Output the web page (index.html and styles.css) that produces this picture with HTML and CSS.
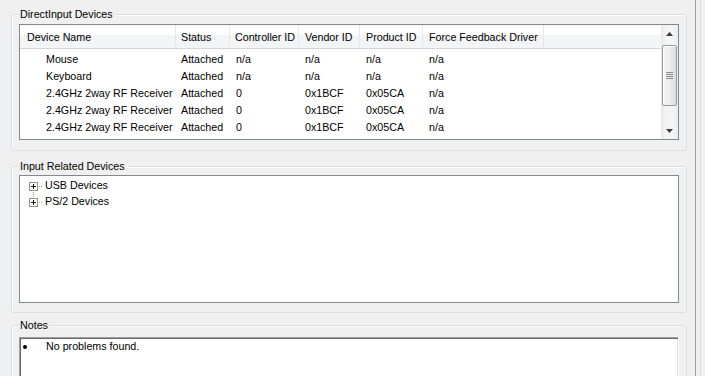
FILE: index.html
```html
<!DOCTYPE html>
<html>
<head>
<meta charset="utf-8">
<link rel="stylesheet" href="styles.css">
</head>
<body>
<div class="window">
  <div class="main">
    <section class="group g1">
      <div class="group-label">DirectInput Devices</div>
      <div class="listview">
        <div class="lv-body">
          <div class="lv-header cols">
            <div class="hcell">Device Name</div>
            <div class="hcell">Status</div>
            <div class="hcell">Controller ID</div>
            <div class="hcell">Vendor ID</div>
            <div class="hcell">Product ID</div>
            <div class="hcell">Force Feedback Driver</div>
            <div class="hcell filler"></div>
          </div>
          <div class="lv-rows">
            <div class="lv-row cols"><div class="c name">Mouse</div><div class="c">Attached</div><div class="c">n/a</div><div class="c">n/a</div><div class="c">n/a</div><div class="c">n/a</div></div>
            <div class="lv-row cols"><div class="c name">Keyboard</div><div class="c">Attached</div><div class="c">n/a</div><div class="c">n/a</div><div class="c">n/a</div><div class="c">n/a</div></div>
            <div class="lv-row cols"><div class="c name">2.4GHz 2way RF Receiver</div><div class="c">Attached</div><div class="c">0</div><div class="c">0x1BCF</div><div class="c">0x05CA</div><div class="c">n/a</div></div>
            <div class="lv-row cols"><div class="c name">2.4GHz 2way RF Receiver</div><div class="c">Attached</div><div class="c">0</div><div class="c">0x1BCF</div><div class="c">0x05CA</div><div class="c">n/a</div></div>
            <div class="lv-row cols"><div class="c name">2.4GHz 2way RF Receiver</div><div class="c">Attached</div><div class="c">0</div><div class="c">0x1BCF</div><div class="c">0x05CA</div><div class="c">n/a</div></div>
          </div>
        </div>
        <div class="vscroll">
          <div class="sb-btn">
            <svg width="7" height="4" viewBox="0 0 7 4"><path d="M3.5 0 L7 4 L0 4 Z" fill="#3c3c3c"/></svg>
          </div>
          <div class="sb-track">
            <div class="sb-thumb">
              <svg width="7" height="7" viewBox="0 0 7 7"><path d="M0 0.5H7M0 2.5H7M0 4.5H7M0 6.5H7" stroke="#8a8a8a" stroke-width="1"/></svg>
            </div>
          </div>
          <div class="sb-btn">
            <svg width="7" height="4" viewBox="0 0 7 4"><path d="M0 0 L7 0 L3.5 4 Z" fill="#3c3c3c"/></svg>
          </div>
        </div>
      </div>
    </section>

    <section class="group g2">
      <div class="group-label">Input Related Devices</div>
      <div class="tree">
        <div class="tree-item">
          <svg class="exp" width="16" height="16" viewBox="0 0 16 16">
            <rect x="0.5" y="5.5" width="8" height="8" fill="#fff" stroke="#919191"/>
            <path d="M2 9.5H7M4.5 7V12" stroke="#1a1a1a"/>
            <rect x="10" y="9" width="1" height="1" fill="#a0a0a0"/>
            <rect x="12" y="9" width="1" height="1" fill="#a0a0a0"/>
            <rect x="4" y="15" width="1" height="1" fill="#a0a0a0"/>
          </svg>
          <span>USB Devices</span>
        </div>
        <div class="tree-item">
          <svg class="exp" width="16" height="16" viewBox="0 0 16 16">
            <rect x="4" y="1" width="1" height="1" fill="#a0a0a0"/>
            <rect x="4" y="3" width="1" height="1" fill="#a0a0a0"/>
            <rect x="0.5" y="5.5" width="8" height="8" fill="#fff" stroke="#919191"/>
            <path d="M2 9.5H7M4.5 7V12" stroke="#1a1a1a"/>
            <rect x="10" y="9" width="1" height="1" fill="#a0a0a0"/>
            <rect x="12" y="9" width="1" height="1" fill="#a0a0a0"/>
          </svg>
          <span>PS/2 Devices</span>
        </div>
      </div>
    </section>

    <section class="group g3">
      <div class="group-label">Notes</div>
      <div class="notes">
        <div class="note"><span class="bullet"></span><span>No problems found.</span></div>
      </div>
    </section>
  </div>
  <div class="divider"></div>
  <div class="side"></div>
</div>
</body>
</html>
```

FILE: styles.css
```css
html, body {
  margin: 0;
  padding: 0;
}
body {
  background: #f0f0f0;
  font: 10.7px "Liberation Sans", Arial, sans-serif;
  color: #000;
}
.window {
  display: flex;
  height: 376px;
  overflow: hidden;
}
.main {
  width: 695px;
  flex: none;
  box-sizing: border-box;
  padding: 14px 8px 0 11px;
  display: flex;
  flex-direction: column;
}
.divider {
  width: 1px;
  flex: none;
  background: #a0a0a0;
}
.side {
  flex: 1;
  margin-left: 4px;
  border-left: 1px solid #dcdcdc;
}

.group {
  position: relative;
  flex: none;
  border: 1px solid #d5dfe5;
  border-radius: 3px;
  box-shadow: inset 1px 1px 0 #fbfcfd;
}
.group-label {
  position: absolute;
  top: -7px;
  left: 6px;
  padding: 0 2px;
  line-height: 13px;
  background: #f0f0f0;
  white-space: nowrap;
}
.g1 { padding: 9px 7px 10px; }
.g2 { margin-top: 15px; padding: 8px 7px 9px; }
.g3 { margin-top: 12px; padding: 11px 7px 0; height: 80px; }

/* list view */
.listview {
  height: 116px;
  box-sizing: border-box;
  border: 1px solid #828790;
  background: #fff;
  display: flex;
}
.lv-body {
  flex: 1;
  min-width: 0;
}
.cols {
  display: grid;
  grid-template-columns: 156px 54px 69px 61px 63px 121px 1fr;
}
.lv-header {
  height: 24px;
  box-sizing: border-box;
  border-bottom: 1px solid #d5d5d5;
  background: linear-gradient(#ffffff 0, #ffffff 45%, #f3f4f6 45%, #f3f4f6 100%);
}
.hcell {
  border-right: 1px solid #e3e8ee;
  padding: 1px 0 0 6px;
  line-height: 22px;
  white-space: nowrap;
  overflow: hidden;
}
.hcell:first-child { padding-left: 7px; }
.hcell:nth-child(2), .hcell:nth-child(3) { padding-left: 5px; }
.hcell.filler { border-right: none; }
.lv-rows { padding-top: 2px; }
.lv-row {
  height: 17px;
  line-height: 17px;
}
.c {
  padding-left: 6px;
  white-space: nowrap;
}
.c:nth-child(2) { padding-left: 5px; }
.c:nth-child(3) { padding-left: 6px; }
.c.name { padding-left: 26px; }

/* scrollbar */
.vscroll {
  width: 17px;
  flex: none;
  display: flex;
  flex-direction: column;
  background: linear-gradient(to right, #e8e8e8, #f4f4f4 30%, #f4f4f4 70%, #ececec);
}
.sb-btn {
  height: 17px;
  flex: none;
  display: flex;
  align-items: center;
  justify-content: center;
}
.sb-track {
  flex: 1;
  padding-top: 3px;
}
.sb-thumb {
  margin: 0 1px;
  height: 61px;
  box-sizing: border-box;
  border: 1px solid #9a9a9a;
  border-radius: 2px;
  background: linear-gradient(to right, #f4f4f4, #ececec 50%, #dcdcdc);
  box-shadow: inset 1px 1px 0 #ffffff;
  display: flex;
  align-items: center;
  justify-content: center;
}

/* tree */
.tree {
  height: 128px;
  box-sizing: border-box;
  border: 1px solid #828790;
  background: #fff;
  padding: 1px 0 0 9px;
}
.tree-item {
  height: 16px;
  line-height: 16px;
  display: flex;
  align-items: flex-start;
}
.exp {
  flex: none;
  display: block;
}

/* notes */
.notes {
  height: 60px;
  box-sizing: border-box;
  background: #fff;
  border-top: 1px solid #a0a0a0;
  border-left: 1px solid #a0a0a0;
  border-right: 1px solid #ffffff;
  box-shadow: inset 1px 1px 0 #696969, inset -1px 0 0 #e3e3e3;
  padding: 2px 0 0 1px;
}
.note {
  display: flex;
  align-items: center;
  line-height: 13px;
}
.bullet {
  width: 4px;
  height: 4px;
  border-radius: 50%;
  background: #000;
  margin: 0 19px 0 2px;
  flex: none;
}
```
